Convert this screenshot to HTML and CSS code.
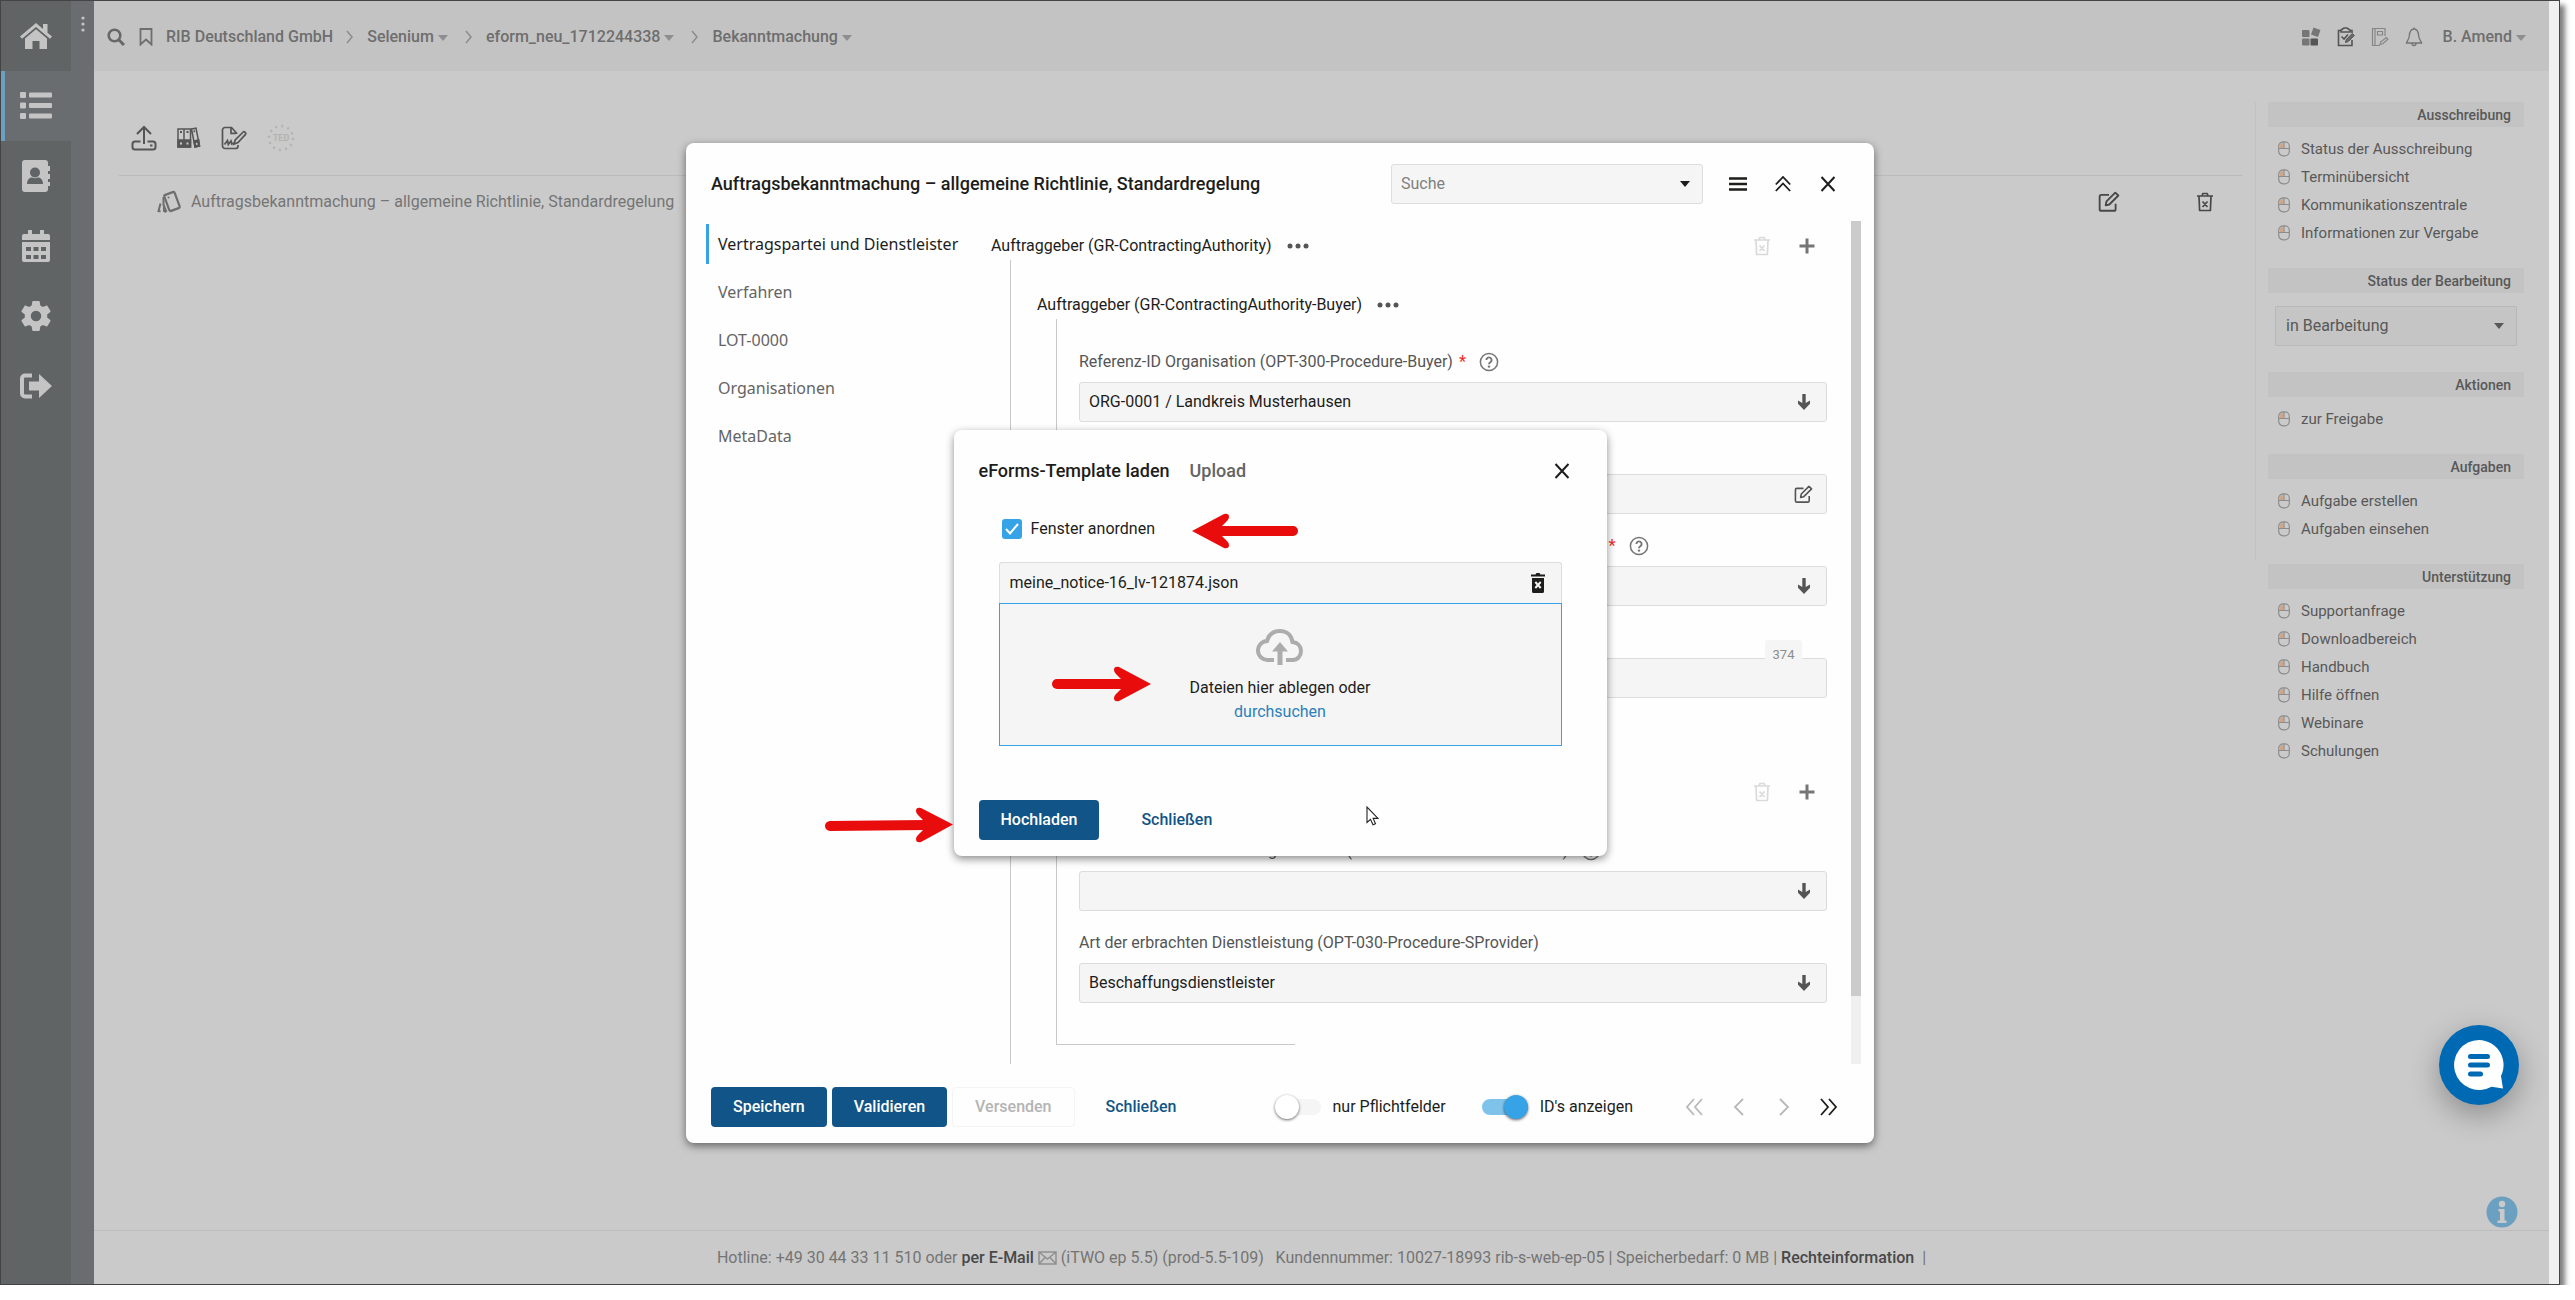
FILE: index.html
```html
<!DOCTYPE html>
<html lang="de">
<head>
<meta charset="utf-8">
<title>Bekanntmachung</title>
<link rel="stylesheet" href="styles.css">
</head>
<body>
<svg class="defs" aria-hidden="true">
  <symbol id="caret" viewBox="0 0 10 6"><path d="M0 0h10L5 6z" fill="currentColor"/></symbol>
  <symbol id="chev" viewBox="0 0 8 14"><path d="M1 1l5 6-5 6" fill="none" stroke="currentColor" stroke-width="1.5"/></symbol>
  <symbol id="mouse" viewBox="0 0 12 16"><path d="M2 7V5a3 3 0 0 1 3-3v5z" fill="#cfa585"/><rect x=".7" y=".8" width="10.600" height="14" rx="4.500" fill="none" stroke="#8c8c8c" stroke-width="1.200"/><path d="M.7 7.500h10.600M6 .8v6.700" stroke="#8c8c8c" stroke-width="1.200"/></symbol>
  <symbol id="trash" viewBox="0 0 18 20"><path d="M1 4h16M3 4l.6 14.500h10.800L15 4M6 4l.8-2.500h4.400L12 4M6.500 9.500l5 5.500m0-5.500l-5 5.500" fill="none" stroke="currentColor" stroke-width="1.700" stroke-linejoin="round"/></symbol>
  <symbol id="plus" viewBox="0 0 16 16"><path d="M8 .5v15M.5 8h15" stroke="currentColor" stroke-width="3"/></symbol>
  <symbol id="down" viewBox="0 0 12 16"><path d="M4.300 0h3.400v9L12 6.500v3.200L6 16 0 9.700V6.500L4.300 9z" fill="currentColor"/></symbol>
  <symbol id="edit" viewBox="0 0 20 20"><path d="M10 3.500H3a1.500 1.500 0 0 0-1.500 1.500v11.500A1.500 1.500 0 0 0 3 18h11.500a1.500 1.500 0 0 0 1.500-1.500v-5M7 13l.7-3.500 8-8 2.800 2.600-8.200 8.200z" fill="none" stroke="currentColor" stroke-width="1.700" stroke-linejoin="round"/></symbol>
  <symbol id="help" viewBox="0 0 20 20"><circle cx="10" cy="10" r="8.600" fill="none" stroke="currentColor" stroke-width="1.500"/><path d="M7.400 8a2.600 2.600 0 1 1 4 2.200c-.9.600-1.400.9-1.400 2" fill="none" stroke="currentColor" stroke-width="1.900"/><circle cx="10" cy="14.600" r="1.200" fill="currentColor"/></symbol>
  <symbol id="close" viewBox="0 0 16 16"><path d="M1.500 1l13 14M14.500 1l-13 14" stroke="currentColor" stroke-width="2"/></symbol>
  <symbol id="dots" viewBox="0 0 22 6"><g fill="currentColor"><circle cx="3" cy="3" r="2.500"/><circle cx="11" cy="3" r="2.500"/><circle cx="19" cy="3" r="2.500"/></g></symbol>
  <symbol id="arrow" viewBox="0 0 108 36"><path d="M5 18h72" stroke="#e90c0c" stroke-width="10" stroke-linecap="round"/><path d="M106 18L74 1q-5-1-5 3 0 2 2 4l10 10-10 10q-2 2-2 4 0 4 5 3z" fill="#e90c0c"/></symbol>
</svg>

<div class="frame">
  <nav class="rail" aria-label="Hauptmenü">
    <a href="#" aria-label="Start"><svg width="32" height="28" viewBox="0 0 32 28" fill="currentColor"><path d="M16 1L0 14.500l2 2.200L16 5l14 11.700 2-2.200-4.500-3.800V2H23v5z"/><path d="M5 16.500L16 7.300l11 9.200V27h-7.500v-8h-7v8H5z"/></svg></a>
    <a href="#" class="on" aria-label="Liste"><svg width="32" height="28" viewBox="0 0 32 28" fill="currentColor"><rect width="6" height="6" y="0" rx="1"/><rect width="6" height="6" y="10.500" rx="1"/><rect width="6" height="6" y="21" rx="1"/><rect x="9" width="23" height="5" y=".5" rx="1"/><rect x="9" width="23" height="5" y="11" rx="1"/><rect x="9" width="23" height="5" y="21.500" rx="1"/></svg></a>
    <a href="#" aria-label="Kontakte"><svg width="30" height="32" viewBox="0 0 30 32"><path fill="currentColor" d="M4 0h20a3 3 0 0 1 3 3v3h2v5h-2v3h2v5h-2v3h2v4h-2v3a3 3 0 0 1-3 3H4a3 3 0 0 1-3-3V3a3 3 0 0 1 3-3z"/><circle cx="14" cy="12.500" r="5" fill="#606465"/><path d="M6 24c0-5 3-6.500 5-6.500 2 1 4 1 6 0 2 0 5 1.500 5 6.500z" fill="#606465"/></svg></a>
    <a href="#" aria-label="Kalender"><svg width="30" height="32" viewBox="0 0 30 32"><path fill="currentColor" d="M1 10V6a2 2 0 0 1 2-2h4V0h4v4h8V0h4v4h4a2 2 0 0 1 2 2v4zM1 12h28v18a2 2 0 0 1-2 2H3a2 2 0 0 1-2-2z"/><path fill="#606465" d="M5 17h5v4H5zm7.500 0h5v4h-5zm7.500 0h5v4h-5zM5 25h5v4H5zm7.500 0h5v4h-5zm7.500 0h5v4h-5z"/></svg></a>
    <a href="#" aria-label="Einstellungen"><svg width="36" height="36" viewBox="0 0 24 24" fill="currentColor"><path fill-rule="evenodd" d="M19.430 12.980c.04-.32.070-.64.070-.98s-.03-.66-.07-.98l2.110-1.650c.19-.15.240-.42.120-.64l-2-3.460c-.12-.22-.39-.3-.61-.22l-2.490 1c-.52-.4-1.080-.73-1.690-.98l-.38-2.650A.49.490 0 0 0 14 2h-4c-.25 0-.46.180-.49.420l-.38 2.650c-.61.250-1.170.59-1.690.98l-2.490-1c-.23-.09-.49 0-.61.220l-2 3.460c-.13.220-.07.490.12.640l2.110 1.650c-.04.320-.07.650-.07.980s.03.660.07.980l-2.110 1.650c-.19.150-.24.420-.12.640l2 3.460c.12.220.39.300.61.220l2.490-1c.52.400 1.080.730 1.690.980l.38 2.650c.03.240.24.420.49.420h4c.25 0 .46-.18.490-.42l.38-2.650c.61-.25 1.170-.59 1.690-.98l2.490 1c.23.090.49 0 .61-.22l2-3.460c.12-.22.070-.49-.12-.64zM12 15.500a3.500 3.500 0 1 1 0-7 3.500 3.500 0 0 1 0 7z"/></svg></a>
    <a href="#" aria-label="Abmelden"><svg width="32" height="26" viewBox="0 0 32 26"><path d="M12 2.500H5A3 3 0 0 0 2 5.500v15a3 3 0 0 0 3 3h7" fill="none" stroke="currentColor" stroke-width="4"/><path fill="currentColor" d="M9 8.500h10V1l13 12-13 12v-7.500H9z"/></svg></a>
  </nav>
  <div class="gutter"><svg width="4" height="16" viewBox="0 0 4 16" fill="#c4c4c4"><circle cx="2" cy="2" r="1.600"/><circle cx="2" cy="8" r="1.600"/><circle cx="2" cy="14" r="1.600"/></svg></div>

  <div class="page">
    <header class="top">
      <svg class="ts" width="18" height="18" viewBox="0 0 18 18"><circle cx="7.500" cy="7.500" r="5.800" fill="none" stroke="#686868" stroke-width="2.600"/><path d="M11.500 11.500L17 17" stroke="#686868" stroke-width="3"/></svg>
      <svg class="tb" width="14" height="18" viewBox="0 0 14 18"><path d="M1.500 1h11v15.500L7 11.500l-5.500 5z" fill="none" stroke="#6e6e6e" stroke-width="1.800"/></svg>
      <a href="#">RIB Deutschland GmbH</a>
      <svg class="sep" width="8" height="14"><use href="#chev"/></svg>
      <a href="#">Selenium</a><svg class="car" width="10" height="6"><use href="#caret"/></svg>
      <svg class="sep" width="8" height="14"><use href="#chev"/></svg>
      <a href="#">eform_neu_1712244338</a><svg class="car" width="10" height="6"><use href="#caret"/></svg>
      <svg class="sep" width="8" height="14"><use href="#chev"/></svg>
      <a href="#">Bekanntmachung</a><svg class="car" width="10" height="6"><use href="#caret"/></svg>
      <div class="tools">
        <svg width="20" height="20" viewBox="0 0 20 20"><rect x="1" y="3" width="7.500" height="7" rx="1" fill="#767676"/><rect x="1" y="11.500" width="7.500" height="7" rx="1" fill="#767676"/><rect x="9.500" y="11.500" width="7.500" height="7" rx="1" fill="#555"/><path d="M12.500 .5l7 2.500-2.500 7-7-2.500z" fill="#767676"/></svg>
        <svg width="18" height="20" viewBox="0 0 18 20" fill="none" stroke="#555" stroke-width="1.600"><path d="M15 13v5.500H1.500V3.500H4M13 3.500h2V6M4 5V3l3-2h3l3 2v2zM4.500 9.500L7 12l4-4.500"/><path d="M8.500 15.500l.8-3 6-6 2 2-6 6z" fill="#6a6a6a" stroke-width="1"/></svg>
        <svg width="18" height="20" viewBox="0 0 18 20" fill="none" stroke="#868686" stroke-width="1.200"><path d="M9 18.500H1.500V1.500H14V9M4 1.500v17M6.500 4.500h5V8h-5zM9 17.500l.8-2.600 5.500-4.400 1.600 1.700-5.200 4.600z"/></svg>
        <svg width="18" height="20" viewBox="0 0 18 20" fill="none" stroke="#747474" stroke-width="1.300"><path d="M9 2C5 2 4.500 6 4.300 9 4 12.500 2 13.500 1.500 16h15c-.5-2.500-2.500-3.500-2.800-7C13.500 6 13 2 9 2zM7 16.500a2 2 0 0 0 4 0M9 .5V2"/></svg>
      </div>
      <a href="#">B. Amend</a><svg class="car" width="10" height="6"><use href="#caret"/></svg>
    </header>

    <div class="work">
      <section class="list">
        <div class="bar">
          <svg width="26" height="26" viewBox="0 0 26 26" fill="none" stroke="#555" stroke-width="2"><path d="M13 19V2M6 9l7-7 7 7"/><path d="M9.500 16.500H4a2.500 2.500 0 0 0-2.500 2.500v3A2.500 2.500 0 0 0 4 24.500h18a2.500 2.500 0 0 0 2.500-2.500v-3a2.500 2.500 0 0 0-2.500-2.500h-5.500"/><path d="M19 20.500h2.500"/></svg>
          <svg width="24" height="22" viewBox="0 0 24 22" fill="none" stroke="#555" stroke-width="1.500"><path d="M1 2h6v18H1zM7 2h6.500v18H7zM14.500 2l4.500-.8L22.500 19l-4.500 1z"/><path d="M1 13h12.500v7H1zM17 14l4.700-1 .8 6-4.500 1z" fill="#555"/><path d="M3 5h2M9.500 5h2M16.500 4.500l1.500-.3" stroke-width="1.800"/><path d="M3 16.500h2M9.500 16.500h2M19 17l1.500-.3" stroke="#cacaca" stroke-width="2"/></svg>
          <svg width="26" height="24" viewBox="0 0 26 24" fill="none" stroke="#555" stroke-width="1.700"><path d="M17 19v1a2.500 2.500 0 0 1-2.500 2.500H4A2.500 2.500 0 0 1 1.500 20V4A2.500 2.500 0 0 1 4 1.500h6.500L15.500 7v1M10 1.500v5.800h5"/><path d="M3.500 18.500l3-4 .8 4 2.700-3.500.8 3 2-1"/><path d="M13 18l1.200-4 8-8c1-1 3.500 1 2.300 2.300L17 16.500z"/></svg>
          <svg width="28" height="28" viewBox="0 0 28 28"><circle cx="14" cy="14" r="12" fill="none" stroke="#b3b3b3" stroke-width="2.500" stroke-dasharray="2 4.280"/><text x="14" y="17" text-anchor="middle" class="ted">TED</text></svg>
        </div>
        <div class="row">
          <svg width="25" height="24" viewBox="0 0 25 24" fill="none" stroke="#6e6e6e"><rect x="9.500" y="3" width="11" height="17" rx="1.500" transform="rotate(-20 15 11.500)" stroke-width="2.200"/><circle cx="11.500" cy="7.500" r="1" fill="#6e6e6e" stroke="none"/><path d="M6.500 7v8l3 7M3.500 13.500L1.500 21l2 .5M7 15v6l2 1" stroke-width="2"/></svg>
          <span>Auftragsbekanntmachung – allgemeine Richtlinie, Standardregelung</span>
          <svg class="re" width="22" height="22"><use href="#edit"/></svg>
          <svg class="rt" width="18" height="20"><use href="#trash"/></svg>
        </div>
      </section>
      <aside class="side">
        <h2>Ausschreibung</h2>
        <ul>
          <li><svg width="12" height="16"><use href="#mouse"/></svg><a href="#">Status der Ausschreibung</a></li>
          <li><svg width="12" height="16"><use href="#mouse"/></svg><a href="#">Terminübersicht</a></li>
          <li><svg width="12" height="16"><use href="#mouse"/></svg><a href="#">Kommunikationszentrale</a></li>
          <li><svg width="12" height="16"><use href="#mouse"/></svg><a href="#">Informationen zur Vergabe</a></li>
        </ul>
        <h2>Status der Bearbeitung</h2>
        <div class="pick"><select aria-label="Status der Bearbeitung"><option>in Bearbeitung</option></select><svg width="10" height="6"><use href="#caret"/></svg></div>
        <h2>Aktionen</h2>
        <ul><li><svg width="12" height="16"><use href="#mouse"/></svg><a href="#">zur Freigabe</a></li></ul>
        <h2>Aufgaben</h2>
        <ul>
          <li><svg width="12" height="16"><use href="#mouse"/></svg><a href="#">Aufgabe erstellen</a></li>
          <li><svg width="12" height="16"><use href="#mouse"/></svg><a href="#">Aufgaben einsehen</a></li>
        </ul>
        <h2>Unterstützung</h2>
        <ul>
          <li><svg width="12" height="16"><use href="#mouse"/></svg><a href="#">Supportanfrage</a></li>
          <li><svg width="12" height="16"><use href="#mouse"/></svg><a href="#">Downloadbereich</a></li>
          <li><svg width="12" height="16"><use href="#mouse"/></svg><a href="#">Handbuch</a></li>
          <li><svg width="12" height="16"><use href="#mouse"/></svg><a href="#">Hilfe öffnen</a></li>
          <li><svg width="12" height="16"><use href="#mouse"/></svg><a href="#">Webinare</a></li>
          <li><svg width="12" height="16"><use href="#mouse"/></svg><a href="#">Schulungen</a></li>
        </ul>
      </aside>
    </div>

    <footer class="foot">
      <span>Hotline: +49 30 44 33 11 510 oder <a href="#">per E-Mail</a> <svg width="19" height="14" viewBox="0 0 19 14" fill="none" stroke="#909090" stroke-width="1.500"><path d="M1 1h17v12H1zM1 1l8.500 7L18 1M1 13l6-6.500M18 13l-6-6.500"/></svg> (iTWO ep 5.5) (prod-5.5-109) &nbsp; Kundennummer: 10027-18993 rib-s-web-ep-05 | Speicherbedarf: 0 MB | <a href="#">Rechteinformation</a> &nbsp;|</span>
    </footer>
  </div>
  <div class="strip"></div>

  <svg class="info" width="32" height="32" viewBox="0 0 32 32"><circle cx="16" cy="16" r="15.500" fill="#6ba0c1"/><g fill="#cacaca"><circle cx="16" cy="8" r="3.200"/><path d="M12.500 13h6v11.500h2V27h-9v-2.500h2.500v-9h-1.500z"/></g></svg>
  <button class="chat" aria-label="Chat"><svg width="50" height="50" viewBox="0 0 50 50"><path d="M25 0a25 25 0 1 0 12.500 46.700L49 48.500 47 36A25 25 0 0 0 25 0z" fill="#fff"/><path d="M16.500 16.500h17M16.500 25h17M16.500 34h10" stroke="#0069b4" stroke-width="5" stroke-linecap="round"/></svg></button>

  <div class="layer">
    <div class="modal" role="dialog" aria-labelledby="mt">
      <div class="mhead">
        <h1 id="mt">Auftragsbekanntmachung – allgemeine Richtlinie, Standardregelung</h1>
        <div class="search"><input type="text" placeholder="Suche" aria-label="Suche"><svg width="10" height="6"><use href="#caret"/></svg></div>
        <button class="ico" aria-label="Menü"><svg width="18" height="14" viewBox="0 0 18 14"><path d="M0 1.500h18M0 7h18M0 12.500h18" stroke="currentColor" stroke-width="2.600"/></svg></button>
        <button class="ico" aria-label="Einklappen"><svg width="16" height="16" viewBox="0 0 16 16"><path d="M.8 8.500L8 1l7.200 7.500M.8 15L8 7.500l7.200 7.500" fill="none" stroke="currentColor" stroke-width="1.800"/></svg></button>
        <button class="ico" aria-label="Schließen"><svg width="16" height="16"><use href="#close"/></svg></button>
      </div>
      <div class="mbody">
        <nav class="tabs" aria-label="Abschnitte">
          <a href="#" class="on">Vertragspartei und Dienstleister</a>
          <a href="#">Verfahren</a>
          <a href="#">LOT-0000</a>
          <a href="#">Organisationen</a>
          <a href="#">MetaData</a>
        </nav>
        <div class="form">
          <div class="ghead g1"><span>Auftraggeber (GR-ContractingAuthority)</span><svg width="22" height="6"><use href="#dots"/></svg><svg class="tr" width="18" height="20"><use href="#trash"/></svg><svg class="pl" width="16" height="16"><use href="#plus"/></svg></div>
          <div class="lvl1">
            <div class="ghead g2"><span>Auftraggeber (GR-ContractingAuthority-Buyer)</span><svg width="22" height="6"><use href="#dots"/></svg></div>
            <div class="lvl2">
              <div class="field"><label for="f1">Referenz-ID Organisation (OPT-300-Procedure-Buyer) <b>*</b><svg width="20" height="20"><use href="#help"/></svg></label>
                <div class="box"><select id="f1"><option>ORG-0001 / Landkreis Musterhausen</option></select><svg width="12" height="16"><use href="#down"/></svg></div></div>
              <div class="field"><label for="f2">URL des Beschafferprofils</label>
                <div class="box wide"><input id="f2" type="text"><svg width="19" height="19"><use href="#edit"/></svg></div></div>
              <div class="field"><label for="f3">Rechtsform des Erwerbers und Art des öffentlichen Auftraggebers (BT-11) <b>*</b><svg width="20" height="20"><use href="#help"/></svg></label>
                <div class="box"><select id="f3"><option></option></select><svg width="12" height="16"><use href="#down"/></svg></div></div>
              <div class="field"><label for="f4">Beschreibung</label>
                <div class="box"><input id="f4" type="text"><span class="count">374</span></div></div>
            </div>
            <div class="ghead g3"><span>Dienstleister (GR-Procedure-SProvider)</span><svg class="tr" width="18" height="20"><use href="#trash"/></svg><svg class="pl" width="16" height="16"><use href="#plus"/></svg></div>
            <div class="lvl2 last">
              <div class="field"><label for="f5">Referenz-ID Dienstleisterorganisation (OPT-300-Procedure-SProvider)<svg width="20" height="20"><use href="#help"/></svg></label>
                <div class="box"><select id="f5"><option></option></select><svg width="12" height="16"><use href="#down"/></svg></div></div>
              <div class="field"><label for="f6">Art der erbrachten Dienstleistung (OPT-030-Procedure-SProvider)</label>
                <div class="box"><select id="f6"><option>Beschaffungsdienstleister</option></select><svg width="12" height="16"><use href="#down"/></svg></div></div>
            </div>
          </div>
        </div>
        <div class="track"><div class="thumb"></div></div>
      </div>
      <div class="mfoot">
        <button class="btn">Speichern</button>
        <button class="btn">Validieren</button>
        <button class="btn off" disabled>Versenden</button>
        <button class="btn flat">Schließen</button>
        <label class="sw push"><input type="checkbox">nur Pflichtfelder</label>
        <label class="sw"><input type="checkbox" checked>ID's anzeigen</label>
        <div class="pager">
          <button aria-label="Erste" disabled><svg width="18" height="18" viewBox="0 0 18 18"><path d="M9 1L2 9l7 8M17 1l-7 8 7 8"/></svg></button>
          <button aria-label="Zurück" disabled><svg width="18" height="18" viewBox="0 0 18 18"><path d="M13 1L5 9l8 8"/></svg></button>
          <button aria-label="Weiter" disabled><svg width="18" height="18" viewBox="0 0 18 18"><path d="M5 1l8 8-8 8"/></svg></button>
          <button aria-label="Letzte"><svg width="18" height="18" viewBox="0 0 18 18"><path d="M1 1l7 8-7 8M9 1l7 8-7 8"/></svg></button>
        </div>
      </div>
    </div>
  </div>

  <div class="layer">
    <div class="dlg" role="dialog" aria-labelledby="dt">
      <div class="dhead"><h1 id="dt">eForms-Template laden</h1><span>Upload</span><button class="ico" aria-label="Schließen"><svg width="16" height="16"><use href="#close"/></svg></button></div>
      <div class="dbody">
        <label class="chk"><input type="checkbox" checked><svg width="14" height="12" viewBox="0 0 14 12"><path d="M1 6l4 4.500L13 1" fill="none" stroke="#fff" stroke-width="2"/></svg>Fenster anordnen</label>
        <div class="file"><span>meine_notice-16_lv-121874.json</span><svg width="16" height="20" viewBox="0 0 16 20"><path d="M1 1.500h4.500L6.500 0h3l1 1.500H15v2H1zM2 5h12v13.500a1.500 1.500 0 0 1-1.500 1.500h-9A1.500 1.500 0 0 1 2 18.500z" fill="#1d1d1b"/><path d="M5.300 9l5.400 6m0-6l-5.400 6" stroke="#f5f5f5" stroke-width="2"/></svg></div>
        <div class="drop">
          <svg width="48" height="38" viewBox="0 0 48 38" fill="none" stroke="#acacac" stroke-width="4"><path d="M18 32h-6A9.500 9.500 0 0 1 11 13C13 6 18 3 24 3c7 0 11.500 4.500 12.500 11 5 .5 8.500 4 8.500 9s-3.500 9-8.500 9H30"/><path d="M24 37V22" stroke-width="5"/><path d="M24 14l8 9.500H16z" fill="#acacac" stroke="none"/></svg>
          <span>Dateien hier ablegen oder</span>
          <a href="#">durchsuchen</a>
        </div>
      </div>
      <div class="dfoot"><button class="btn">Hochladen</button><button class="btn flat">Schließen</button></div>
      <svg class="mark m1" width="108" height="36"><use href="#arrow"/></svg>
      <svg class="mark m2" width="100" height="36" viewBox="0 0 100 36"><path d="M5 18h66" stroke="#e90c0c" stroke-width="10" stroke-linecap="round"/><path d="M99 18L67 1q-5-1-5 3 0 2 2 4l10 10-10 10q-2 2-2 4 0 4 5 3z" fill="#e90c0c"/></svg>
      <svg class="mark m3" width="130" height="36" viewBox="0 0 130 36"><path d="M5 19l96-1" stroke="#e90c0c" stroke-width="10" stroke-linecap="round"/><path d="M128 17.500L96 1q-5-1-5 3 0 2 2 4l10 10-10 10q-2 2-2 4 0 4 5 3z" fill="#e90c0c"/></svg>
      <svg class="mark cur" width="13" height="20" viewBox="0 0 13 20"><path d="M1 1v15.500l3.500-3.200L7 18.800l2.500-1.100L7.200 12.400H12z" fill="#fff" stroke="#222" stroke-width="1.100"/></svg>
    </div>
  </div>
</div>
</body>
</html>
```

FILE: styles.css
```css
* { box-sizing: border-box; }
body { margin: 0; background: #fff; font: 16px/24px Roboto, sans-serif; color: #1d1d1b; }
a { color: inherit; text-decoration: none; }
button, input, select { font: inherit; color: inherit; margin: 0; }
button { padding: 0; border: 0; background: none; }
svg { flex: none; }
h1, h2, ul { margin: 0; padding: 0; }
h1 { font-size: 18px; font-weight: 500; }
.defs { position: absolute; width: 0; height: 0; }

.frame { position: relative; display: flex; height: calc(100vh - 15px); margin-right: 15px; border: 1px solid #444; background: #cacaca; box-shadow: 5px 5px 5px rgba(0,0,0,.5); }

/* left rail */
.rail { width: 70px; background: #606465; }
.rail a { display: flex; align-items: center; justify-content: center; height: 70px; color: #c4c4c4; }
.rail a.on { background: #696d6f; box-shadow: inset 4px 0 #6ba0c1; }
.gutter { width: 23px; background: #696d6f; text-align: center; line-height: 0; padding-top: 15px; }
.page { flex: 1; min-width: 0; display: flex; flex-direction: column; }
.strip { width: 10px; background: #f0f0f0; }

/* top bar */
.top { display: flex; align-items: center; height: 70px; padding: 2px 19px 0 13px; background: #c3c3c3; color: #6e6e6e; font-weight: 500; }
.top a { white-space: nowrap; }
.tb { margin: 0 13px 0 14px; }
.sep { margin: 0 13px; color: #8c8c8c; }
.car { margin: 2px 4px 0; color: #8e8e8e; }
.tools { display: flex; gap: 16px; margin: 0 20px 0 auto; }

/* document list */
.work { flex: 1; display: flex; align-items: flex-start; padding-top: 31px; }
.list { flex: 1; min-width: 0; height: 458px; padding: 0 12px 0 25px; border-right: 1px solid #c2c2c2; }
.bar { display: flex; align-items: center; gap: 20px; height: 73px; padding: 0 0 2px 12px; }
.ted { font-size: 9px; font-weight: 700; fill: #b3b3b3; }
.row { display: flex; align-items: center; height: 52px; padding: 0 29px 0 38px; border-top: 1px solid #bbb; color: #757575; }
.row span { margin-left: 9px; }
.re { margin-left: auto; color: #484848; }
.rt { margin-left: 76px; color: #484848; }

/* right column */
.side { width: 293px; padding: 0 25px 0 12px; color: #585858; }
.side h2 { height: 25px; padding-right: 13px; background: #c3c3c3; font-size: 14px; line-height: 26px; font-weight: 500; text-align: right; }
.side ul { margin: 8px 0 21px; list-style: none; }
.side li { display: flex; align-items: center; gap: 11px; height: 28px; padding-left: 10px; font-size: 15px; line-height: 26px; }
.pick { position: relative; margin: 13px 7px 26px; }
.pick select { width: 100%; height: 40px; padding: 0 10px; appearance: none; border: 1px solid #b8b8b8; border-radius: 2px; background: #c5c5c5; }
.pick svg, .search svg { position: absolute; right: 13px; top: 17px; }

/* page footer */
.foot { display: flex; justify-content: center; align-items: center; height: 54px; border-top: 1px solid #bdbdbd; color: #747474; }
.foot span { white-space: nowrap; }
.foot a { font-weight: 500; color: #484848; }
.foot svg { vertical-align: -2px; }
.info { position: absolute; right: 41px; bottom: 56px; }
.chat { position: absolute; right: 40px; bottom: 179px; width: 80px; height: 80px; padding: 15px; border-radius: 50%; background: #0069b4; line-height: 0; box-shadow: 0 10px 30px rgba(0,0,0,.3); }

/* dialogs */
.layer { position: absolute; inset: 0; display: flex; align-items: center; justify-content: center; pointer-events: none; }
.layer > div { pointer-events: auto; border-radius: 8px; background: #fefefe; }
.modal { display: flex; flex-direction: column; width: 1188px; max-width: 96%; height: 1000px; max-height: 96%; box-shadow: 0 3px 9px rgba(0,0,0,.5); }
.mhead { display: flex; align-items: center; padding: 21px 27px 17px 25px; }
.search { position: relative; width: 312px; margin: 0 18px 0 auto; }
.search input { width: 100%; height: 40px; padding: 0 9px; border: 1px solid #ddd; border-radius: 3px; background: #f5f5f5; }
.search input::placeholder { color: #808080; opacity: 1; }
.ico { display: flex; align-items: center; justify-content: center; width: 34px; height: 40px; margin-left: 11px; color: #1d1d1b; }
.search + .ico { margin-left: 0; }
.mhead .ico:last-child { margin-right: 2px; }

.mbody { flex: 1; min-height: 0; display: flex; padding: 0 13px 0 20px; overflow: hidden; }
.tabs { display: flex; flex-direction: column; gap: 8px; width: 285px; padding-top: 3px; font-family: "Noto Sans", sans-serif; color: #646464; }
.tabs a { height: 40px; padding-left: 9px; border-left: 3px solid transparent; line-height: 40px; white-space: nowrap; }
.tabs .on { border-color: #36a3e6; color: #1d1d1b; }
.form { flex: 1; min-width: 0; overflow: hidden; display: flex; flex-direction: column; }
.track { width: 10px; margin-left: 24px; background: #f0f0f0; }
.thumb { height: 92%; background: #cbcbcb; }
.ghead { display: flex; align-items: center; height: 28px; color: #1d1d1b; }
.ghead svg { margin-left: 15px; color: #555; }
.ghead .tr { margin-left: auto; margin-right: 28px; color: #dadada; }
.ghead .pl { margin: 0 12px 0 0; color: #757575; }
.g1 { margin: 11px 0 0; }
.g3 { margin-top: 80px; }
.lvl1 { flex: 1 0 auto; margin-left: 19px; padding: 31px 0 0 26px; border-left: 1px solid #c8c8c8; }
.lvl2 { position: relative; margin-left: 19px; padding: 31px 0 0 22px; border-left: 1px solid #c8c8c8; }
.last { padding: 33px 0 22px 22px; }
.last::after { content: ""; position: absolute; left: 0; bottom: 0; width: 238px; border-bottom: 1px solid #c8c8c8; }
.field { margin-bottom: 20px; }
.field label { display: flex; align-items: center; height: 24px; margin-bottom: 8px; color: #555; white-space: nowrap; }
.field b { margin-left: 6px; font-weight: 500; color: #f5302c; }
.field label svg { margin-left: 13px; color: #757575; }
.box { position: relative; color: #1d1d1b; }
.box select, .box input { display: block; width: 100%; height: 40px; padding: 0 9px; appearance: none; border: 1px solid #dcdcdc; border-radius: 3px; background: #f5f5f5; }
.box svg { position: absolute; right: 17px; top: 12px; color: #555; }
.wide svg { right: 14px; top: 11px; }
.count { position: absolute; right: 25px; top: -18px; width: 37px; height: 22px; padding-top: 8px; border-radius: 3px 3px 0 0; background: #f5f5f5; color: #8c8c8c; font-size: 13px; line-height: 14px; text-align: center; }

.mfoot { display: flex; align-items: center; padding: 23px 36px 16px 25px; }
.btn { height: 40px; padding: 0 22px; margin-right: 5px; border-radius: 4px; background: #115487; color: #fff; font-weight: 500; }
.flat { margin-left: 4px; background: none; color: #115487; }
.off { border: 1px solid #f4f4f4; background: none; color: #b4b4b4; }
.sw { display: flex; align-items: center; margin-right: 36px; white-space: nowrap; }
.push { margin-left: auto; }
.sw input { position: relative; width: 46px; height: 16px; margin-right: 12px; appearance: none; border-radius: 8px; background: #f5f5f5; }
.sw input::before { content: ""; position: absolute; left: 0; top: -4px; width: 24px; height: 24px; border-radius: 50%; background: #fff; box-shadow: 0 1px 3px rgba(0,0,0,.6); }
.sw input:checked { background: #80c3ea; }
.sw input:checked::before { left: 22px; background: #36a3e6; }
.pager { display: flex; gap: 27px; margin-left: 16px; line-height: 0; }
.pager path { fill: none; stroke: #1d1d1b; stroke-width: 1.8; }
.pager :disabled path { stroke: #b8b8b8; }

.dlg { position: relative; width: 653px; max-width: 94%; box-shadow: 0 3px 8px rgba(0,0,0,.45); }
.dhead { display: flex; align-items: center; padding: 21px 28px 0 25px; }
.dhead span { margin-left: 20px; color: #646464; font-size: 18px; font-weight: 500; }
.dhead .ico { margin-left: auto; }
.dbody { padding: 28px 45px 0; }
.chk { position: relative; display: flex; align-items: center; width: max-content; height: 20px; margin: 0 0 23px 3px; }
.chk input { width: 20px; height: 20px; margin-right: 9px; appearance: none; border-radius: 3px; background: #36a3e6; }
.chk svg { position: absolute; left: 3px; top: 4px; }
.file { display: flex; align-items: center; justify-content: space-between; height: 41px; padding: 0 15px 0 10px; border: 1px solid #ddd; border-bottom: 0; border-radius: 3px 3px 0 0; background: #f5f5f5; }
.drop { display: flex; flex-direction: column; align-items: center; height: 143px; padding-top: 24px; border: 1px solid #36a3e6; background: #f5f5f5; }
.drop span { margin-top: 10px; }
.drop a { color: #2c80b9; }
.dfoot { padding: 54px 25px 16px; }
.dfoot .flat { margin-left: 15px; }
.mark { position: absolute; }
.m1 { left: 236px; top: 83px; transform: rotate(180deg); }
.m2 { left: 98px; top: 236px; }
.m3 { left: -129px; top: 377px; }
.cur { left: 412px; top: 376px; }
```
